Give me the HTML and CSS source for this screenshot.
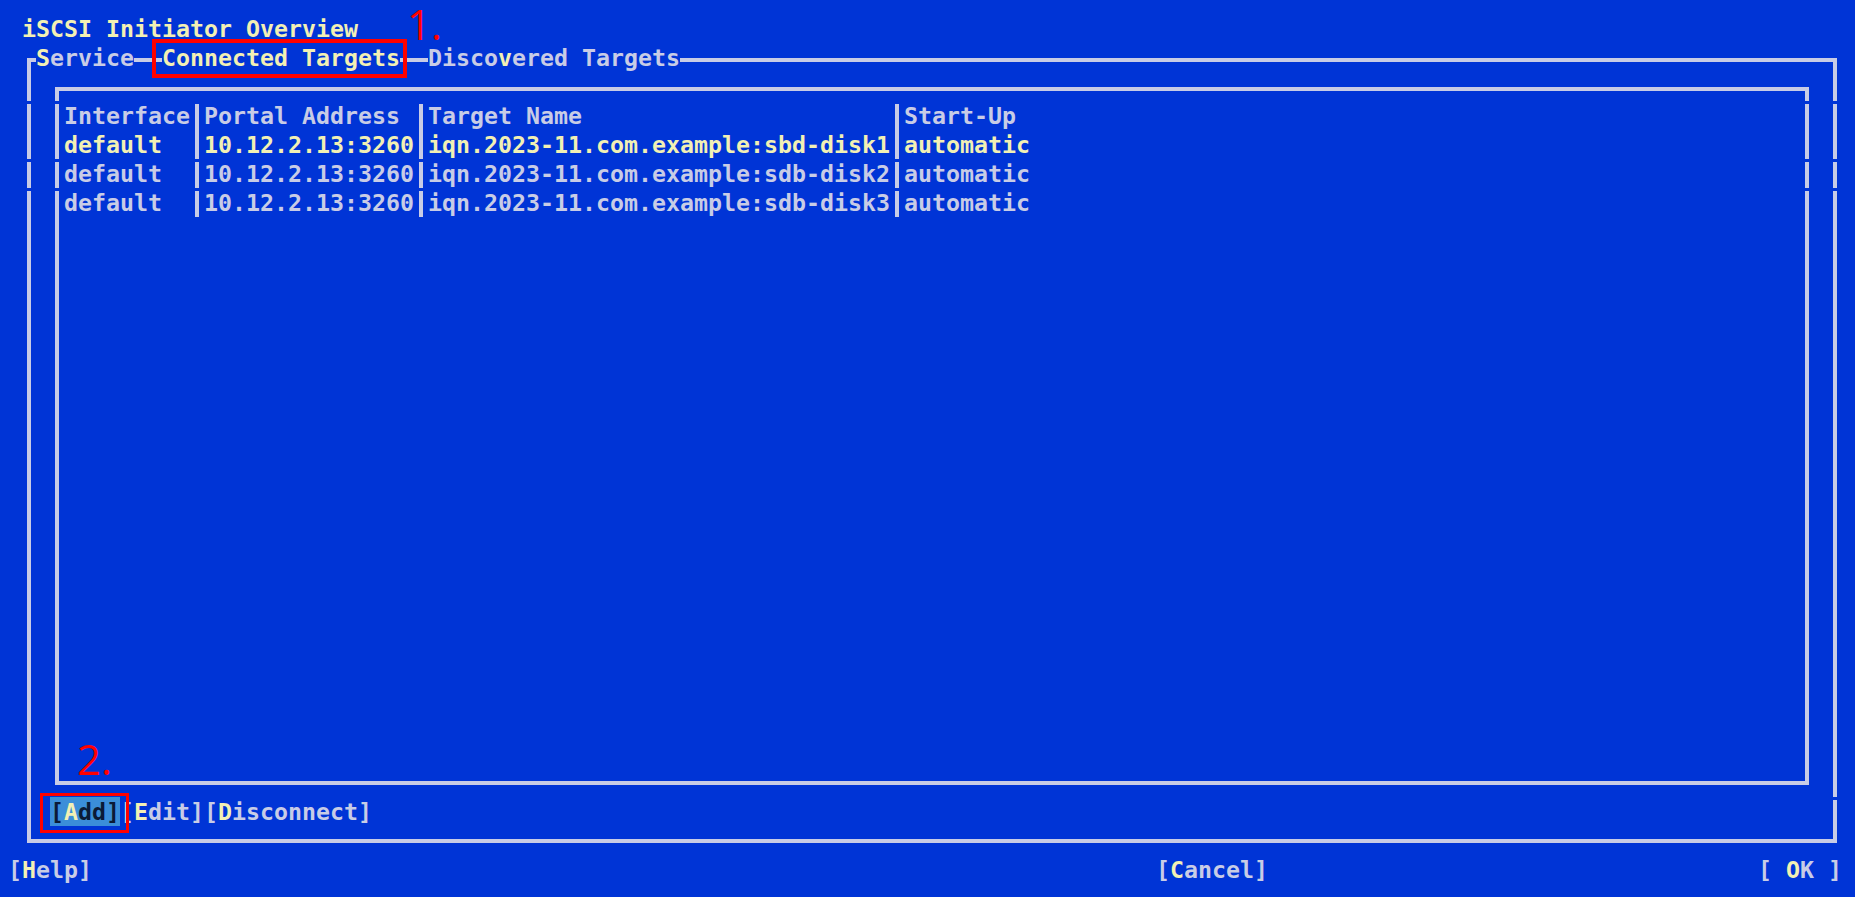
FILE: index.html
```html
<!DOCTYPE html>
<html lang="en">
<head>
<meta charset="utf-8">
<title>iSCSI Initiator Overview</title>
<link rel="stylesheet" href="styles.css">
</head>
<body>
<div class="screen">
  <div class="title">iSCSI Initiator Overview</div>

  <div class="frame outer"></div>
  <div class="tab tab-service"><span class="hk">S</span>ervice</div>
  <div class="tab tab-connected">Connected Targets</div>
  <div class="tab tab-discovered">Disco<span class="hk">v</span>ered Targets</div>

  <div class="frame inner"></div>

  <div class="table">
    <div class="trow gap">
      <span class="c-if">Interface</span><span class="sep"></span><span class="c-portal">Portal Address</span><span class="sep"></span><span class="c-target">Target Name</span><span class="sep"></span><span class="c-start">Start-Up</span>
    </div>
    <div class="trow current">
      <span class="c-if">default</span><span class="sep"></span><span class="c-portal">10.12.2.13:3260</span><span class="sep"></span><span class="c-target">iqn.2023-11.com.example:sbd-disk1</span><span class="sep"></span><span class="c-start">automatic</span>
    </div>
    <div class="trow gap">
      <span class="c-if">default</span><span class="sep"></span><span class="c-portal">10.12.2.13:3260</span><span class="sep"></span><span class="c-target">iqn.2023-11.com.example:sdb-disk2</span><span class="sep"></span><span class="c-start">automatic</span>
    </div>
    <div class="trow gap">
      <span class="c-if">default</span><span class="sep"></span><span class="c-portal">10.12.2.13:3260</span><span class="sep"></span><span class="c-target">iqn.2023-11.com.example:sdb-disk3</span><span class="sep"></span><span class="c-start">automatic</span>
    </div>
  </div>

  <div class="mask r3 c1"></div>
  <div class="mask r3 c3"></div>
  <div class="mask r3 c128"></div>
  <div class="mask r3 c130"></div>
  <div class="mask r5 c1"></div>
  <div class="mask r5 c3"></div>
  <div class="mask r5 c128"></div>
  <div class="mask r5 c130"></div>
  <div class="mask r6 c1"></div>
  <div class="mask r6 c3"></div>
  <div class="mask r6 c128"></div>
  <div class="mask r6 c130"></div>
  <div class="mask r27 c130"></div>

  <div class="actions">
    <span class="btn focused"><span class="br">[</span><span class="hk">A</span>dd<span class="br">]</span></span><span class="btn">[<span class="hk">E</span>dit]</span><span class="btn">[<span class="hk">D</span>isconnect]</span>
  </div>

  <div class="btn-help">[<span class="hk">H</span>elp]</div>
  <div class="btn-cancel">[<span class="hk">C</span>ancel]</div>
  <div class="btn-ok">[ <span class="hk">O</span>K ]</div>
</div>

<div class="annot n1">1.</div>
<div class="annot n2">2.</div>
<div class="redbox box1"></div>
<div class="redbox box2"></div>
</body>
</html>
```

FILE: styles.css
```css
:root {
  --bg: #0034d6;
  --fg: #c8cce6;
  --hk: #f2f0b4;
  --line: #c8cce6;
  --focus: #3b8ed9;
  --dark: #0b1a36;
}

html, body {
  margin: 0;
  padding: 0;
  background: var(--bg);
  overflow: hidden;
}

.screen {
  display: grid;
  grid-template-columns: repeat(132, 14px);
  grid-template-rows: repeat(30, 29px);
  padding: 14px 0 0 8px;
  font-family: "DejaVu Sans Mono", "Liberation Mono", monospace;
  font-size: 23.25px;
  font-weight: bold;
  line-height: 29px;
  color: var(--fg);
  white-space: pre;
}

.hk { color: var(--hk); }

.title {
  grid-row: 1;
  grid-column: 2 / span 26;
  color: var(--hk);
}

.frame {
  border: 4px solid var(--line);
  margin: 15px 5px 12px 5px;
}

.outer {
  grid-row: 2 / span 28;
  grid-column: 2 / span 130;
}

.inner {
  grid-row: 3 / span 25;
  grid-column: 4 / span 126;
}

.tab {
  grid-row: 2;
  background: var(--bg);
  z-index: 1;
}
.tab-service { grid-column: 3 / span 7; }
.tab-connected { grid-column: 12 / span 17; color: var(--hk); }
.tab-discovered { grid-column: 31 / span 18; }

.table {
  grid-row: 4 / span 4;
  grid-column: 5 / span 124;
  display: flex;
  flex-direction: column;
  z-index: 1;
}

.trow {
  display: flex;
  height: 29px;
}
.trow.current { color: var(--hk); }

.c-if { width: 126px; }
.c-portal { width: 210px; }
.c-target { width: 462px; }
.c-start { flex: 1; }

.sep {
  width: 14px;
  background: linear-gradient(to right, transparent 5px, var(--line) 5px, var(--line) 9px, transparent 9px);
}
.trow.gap .sep {
  background-size: 14px 26px;
  background-position: bottom;
  background-repeat: no-repeat;
}

.mask {
  background: var(--bg);
  height: 3px;
  align-self: start;
  z-index: 2;
}
.r3 { grid-row: 4; }
.r5 { grid-row: 6; }
.r6 { grid-row: 7; }
.r27 { grid-row: 28; }
.c1 { grid-column: 2; }
.c3 { grid-column: 4; }
.c128 { grid-column: 129; }
.c130 { grid-column: 131; }

.actions {
  grid-row: 28;
  grid-column: 4 / span 23;
  display: flex;
}
.btn.focused {
  background: var(--focus);
  color: var(--dark);
}
.btn.focused .br { color: var(--dark); }

.btn-help { grid-row: 30; grid-column: 1 / span 6; }
.btn-cancel { grid-row: 30; grid-column: 83 / span 8; }
.btn-ok { grid-row: 30; grid-column: 126 / span 6; }

.annot {
  position: absolute;
  color: #ff0000;
  font-family: "Open Sans", "Liberation Sans", sans-serif;
  font-weight: 400;
  font-size: 42px;
  line-height: 42px;
}
.n1 { left: 407px; top: 3px; }
.n2 { left: 77px; top: 738px; }

.redbox {
  position: absolute;
  box-sizing: border-box;
  border-style: solid;
  border-color: #ff0000;
}
.box1 { left: 152px; top: 39px; width: 255px; height: 39px; border-width: 4px; }
.box2 { left: 40px; top: 793px; width: 89px; height: 40px; border-width: 3px; }
```
